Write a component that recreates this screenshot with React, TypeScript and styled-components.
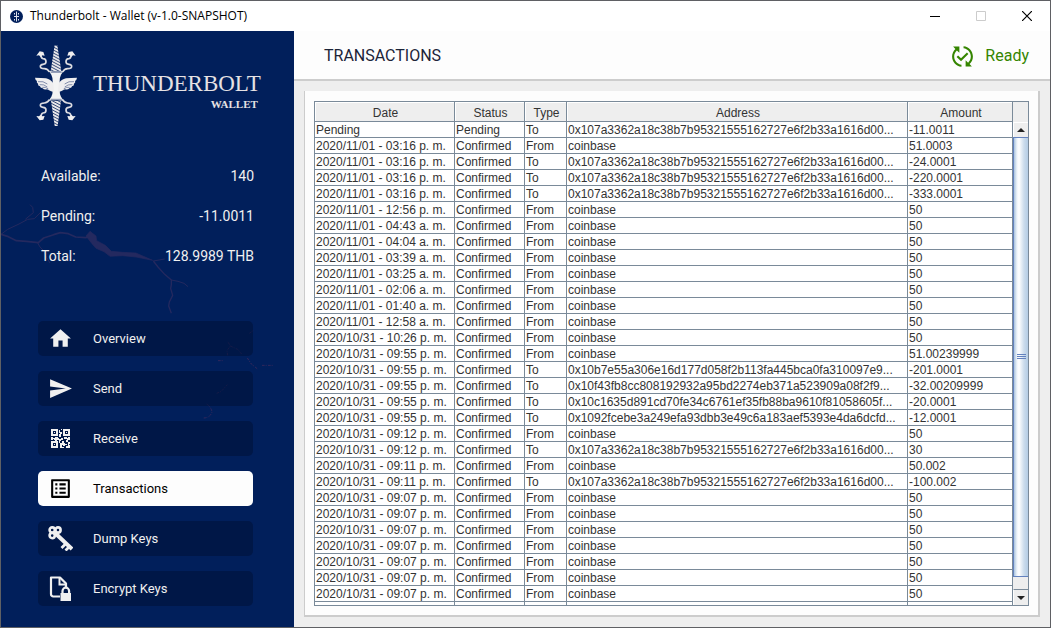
import React from "react";
import styled, { createGlobalStyle, css } from "styled-components";

const navy = "#011f5b";
const gridLine = "#7a8a99";
const paper = "#fdfdfd";

const GlobalStyle = createGlobalStyle`
  *, *::before, *::after { box-sizing: border-box; }
  body { margin: 0; font-family: Roboto, sans-serif; }
  button { font: inherit; border: 0; padding: 0; background: none; cursor: pointer; }
`;

const Window = styled.div`
  display: flex;
  flex-direction: column;
  height: 100vh;
  overflow: hidden;
  border: 1px solid #5f6064;
  background: #eeeeee;
`;

const TitleBar = styled.header`
  display: flex;
  align-items: center;
  flex: none;
  height: 30px;
  padding-left: 9px;
  gap: 7px;
  background: #ffffff;
  color: #000000;
  font: 12px/16px "Open Sans", sans-serif;
`;

const WindowTitle = styled.span`
  flex: 1;
`;

const WindowControls = styled.div`
  display: flex;
`;

const WindowButton = styled.button<{ $muted?: boolean }>`
  display: grid;
  place-items: center;
  width: 46px;
  height: 30px;
  color: ${(p) => (p.$muted ? "#cccccc" : "#000000")};
`;

const Body = styled.div`
  display: flex;
  flex: 1;
  min-height: 0;
`;

const Sidebar = styled.aside`
  position: relative;
  flex: none;
  width: 293px;
  padding: 14px 40px 0 37px;
  background: ${navy};
  color: #f0f0f0;
`;

const Lightning = styled.svg`
  position: absolute;
  inset: 0 auto auto 0;
  pointer-events: none;
`;

const Brand = styled.div`
  display: flex;
  align-items: center;
  height: 82px;
  margin: 0 -10px 0 -4px;
  gap: 15px;
`;

const BrandText = styled.div`
  display: flex;
  flex-direction: column;
  align-items: flex-end;
  padding-top: 12px;
  font-family: "Liberation Serif", serif;
  color: #e6e2e4;
`;

const BrandName = styled.span`
  font-size: 23px;
  line-height: 24px;
`;

const BrandKind = styled.span`
  padding-right: 3px;
  font-size: 11px;
  line-height: 16px;
  font-weight: 700;
`;

const Balances = styled.dl`
  position: relative;
  margin: 29px 0 45px;
  padding-left: 3px;
`;

const Balance = styled.div`
  display: flex;
  justify-content: space-between;
  font-size: 14px;
  line-height: 40px;
  dd { margin: 0; }
`;

const Nav = styled.nav`
  position: relative;
  display: flex;
  flex-direction: column;
  gap: 15px;
  margin-right: 1px;
`;

const NavButton = styled.button<{ $active?: boolean }>`
  display: flex;
  align-items: center;
  gap: 20px;
  height: 35px;
  padding: 0 10px;
  border-radius: 5px;
  font-size: 13px;
  line-height: 16px;
  color: #f0f0f0;
  background: rgba(0, 18, 58, 0.6);
  ${(p) =>
    p.$active &&
    css`
      color: #000000;
      background: ${paper};
    `}
`;

const Main = styled.main`
  display: flex;
  flex-direction: column;
  flex: 1;
  min-width: 0;
`;

const PageHeader = styled.div`
  display: flex;
  align-items: center;
  justify-content: space-between;
  flex: none;
  height: 50px;
  padding: 2px 21px 0 30px;
  background: ${paper};
  border-bottom: 2px solid #cdcdcd;
`;

const PageTitle = styled.h1`
  margin: 0;
  font-size: 16px;
  line-height: 20px;
  font-weight: 400;
  color: #1c2438;
`;

const Status = styled.div`
  display: flex;
  align-items: center;
  gap: 10px;
  font-size: 16px;
  line-height: 20px;
  color: #358500;
`;

const Card = styled.section`
  display: flex;
  flex: 1;
  min-height: 0;
  margin: 10px;
  padding: 10px 9px 9px;
  background: ${paper};
  border: solid #cccccc;
  border-width: 0 2px 2px 1px;
`;

const ScrollPane = styled.div`
  display: flex;
  flex: 1;
  min-width: 0;
  border: 1px solid ${gridLine};
`;

const Viewport = styled.div`
  flex: 1;
  min-width: 0;
  overflow: hidden;
`;

const Table = styled.table`
  width: 100%;
  table-layout: fixed;
  border-collapse: separate;
  border-spacing: 0;
  background: #ffffff;
  font: 12px/14px "Liberation Sans", Arial, sans-serif;
  color: #333333;
`;

const Column = styled.col<{ $width?: number }>`
  ${(p) => p.$width && `width: ${p.$width}px;`}
`;

const HeadCell = styled.th`
  height: 20px;
  padding: 3px 0 0 2px;
  font-weight: 400;
  background: #eeeeee;
  border: solid ${gridLine};
  border-width: 0 1px 1px 0;
  box-shadow: inset 1px 1px #ffffff;
`;

const Cell = styled.td`
  height: 16px;
  padding: 1px 0 0 1px;
  white-space: nowrap;
  overflow: hidden;
  border: solid ${gridLine};
  border-width: 0 1px 1px 0;
`;

const ScrollBar = styled.div`
  display: flex;
  flex-direction: column;
  flex: none;
  width: 15px;
  background: #eeeeee;
`;

const Corner = styled.div`
  flex: none;
  height: 20px;
`;

const ArrowButton = styled.button`
  display: grid;
  place-items: center;
  flex: none;
  height: 15px;
  color: #222222;
  background: #eeeeee;
  border-top: 1px solid #ffffff;
  border-left: 1px solid #ffffff;
  &:last-child {
    height: 16px;
    border-top-color: ${gridLine};
  }
`;

const Thumb = styled.div`
  display: grid;
  place-items: center;
  flex: 440;
  border: 1px solid #6382bf;
  border-right: 0;
  background: linear-gradient(90deg, #a9c3de 0, #eef4fa 3px, #ffffff 5px, #cbdcec 10px, #b4cce4 100%);
`;

const Track = styled.div`
  flex: 12;
`;

const addr = "0x107a3362a18c38b7b95321555162727e6f2b33a1616d00...";

type Tx = [date: string, status: string, type: string, address: string, amount: string];

const from = (date: string, amount: string): Tx => [date, "Confirmed", "From", "coinbase", amount];
const to = (date: string, amount: string, address = addr): Tx => [date, "Confirmed", "To", address, amount];

const transactions: Tx[] = [
  ["Pending", "Pending", "To", addr, "-11.0011"],
  from("2020/11/01 - 03:16 p. m.", "51.0003"),
  to("2020/11/01 - 03:16 p. m.", "-24.0001"),
  to("2020/11/01 - 03:16 p. m.", "-220.0001"),
  to("2020/11/01 - 03:16 p. m.", "-333.0001"),
  from("2020/11/01 - 12:56 p. m.", "50"),
  from("2020/11/01 - 04:43 a. m.", "50"),
  from("2020/11/01 - 04:04 a. m.", "50"),
  from("2020/11/01 - 03:39 a. m.", "50"),
  from("2020/11/01 - 03:25 a. m.", "50"),
  from("2020/11/01 - 02:06 a. m.", "50"),
  from("2020/11/01 - 01:40 a. m.", "50"),
  from("2020/11/01 - 12:58 a. m.", "50"),
  from("2020/10/31 - 10:26 p. m.", "50"),
  from("2020/10/31 - 09:55 p. m.", "51.00239999"),
  to("2020/10/31 - 09:55 p. m.", "-201.0001", "0x10b7e55a306e16d177d058f2b113fa445bca0fa310097e9..."),
  to("2020/10/31 - 09:55 p. m.", "-32.00209999", "0x10f43fb8cc808192932a95bd2274eb371a523909a08f2f9..."),
  to("2020/10/31 - 09:55 p. m.", "-20.0001", "0x10c1635d891cd70fe34c6761ef35fb88ba9610f81058605f..."),
  to("2020/10/31 - 09:55 p. m.", "-12.0001", "0x1092fcebe3a249efa93dbb3e49c6a183aef5393e4da6dcfd..."),
  from("2020/10/31 - 09:12 p. m.", "50"),
  to("2020/10/31 - 09:12 p. m.", "30"),
  from("2020/10/31 - 09:11 p. m.", "50.002"),
  to("2020/10/31 - 09:11 p. m.", "-100.002"),
  from("2020/10/31 - 09:07 p. m.", "50"),
  from("2020/10/31 - 09:07 p. m.", "50"),
  from("2020/10/31 - 09:07 p. m.", "50"),
  from("2020/10/31 - 09:07 p. m.", "50"),
  from("2020/10/31 - 09:07 p. m.", "50"),
  from("2020/10/31 - 09:07 p. m.", "50"),
  from("2020/10/31 - 09:07 p. m.", "50"),
];

const columns: { label: string; width?: number }[] = [
  { label: "Date", width: 140 },
  { label: "Status", width: 70 },
  { label: "Type", width: 42 },
  { label: "Address" },
  { label: "Amount", width: 105 },
];

const Icon = ({ children }: { children: React.ReactNode }) => (
  <svg width="25" height="25" viewBox="0 0 24 24" fill="currentColor" aria-hidden="true">
    {children}
  </svg>
);

const HomeIcon = () => <Icon><path d="M10 20v-6h4v6h5v-8h3L12 3 2 12h3v8z" /></Icon>;
const SendIcon = () => <Icon><path d="M2.01 21L23 12 2.01 3 2 10l15 2-15 2z" /></Icon>;
const ListIcon = () => (
  <Icon>
    <path d="M19 5v14H5V5h14m1.1-2H3.9c-.5 0-.9.4-.9.9v16.2c0 .4.4.9.9.9h16.2c.4 0 .9-.5.9-.9V3.9c0-.5-.5-.9-.9-.9zM11 7h6v2h-6V7zm0 4h6v2h-6v-2zm0 4h6v2h-6v-2zM7 7h2v2H7V7zm0 4h2v2H7v-2zm0 4h2v2H7v-2z" />
  </Icon>
);
const QrIcon = () => (
  <svg width="25" height="25" viewBox="0 0 25 25" fill="currentColor" aria-hidden="true">
    <path
      fillRule="evenodd"
      d="M3 3h7v7H3zM5 5v3h3V5zM15 3h7v7h-7zM17 5v3h3V5zM3 15h7v7H3zM5 17v3h3v-3z"
    />
    <path d="M6 6h1v1H6zM18 6h1v1h-1zM6 18h1v1H6zM11 4h1v2h2v2h-1v3h-2V8h1V7h-1zM13 3h1v1h-1zM3 11h2v1h2v-1h3v1h1v1h2v-1h2v2h-2v1h-1v2h-1v-3H9v1H7v-1H6v-1H5v1H3zM16 11h3v1h1v-1h2v3h-2v1h-1v-2h-3zM12 17h2v-2h2v2h1v1h2v1h-2v1h-2v-1h-1v2h2v1h-4zM18 14h2v2h-2zM20 16h2v2h-1v1h-1zM18 20h2v-1h2v3h-4z" />
  </svg>
);
const KeyIcon = () => (
  <svg width="25" height="25" viewBox="0 0 25 25" fill="none" stroke="currentColor" aria-hidden="true">
    <circle cx="4.200" cy="4" r="2.600" strokeWidth="2.600" />
    <circle cx="10" cy="4" r="2.600" strokeWidth="2.600" />
    <circle cx="4.200" cy="9.600" r="2.600" strokeWidth="2.600" />
    <path d="M7 7l17 16" strokeWidth="4" />
    <path d="M8.500 8.500l2.500-.500" strokeWidth="4" />
    <path d="M18 17.500l-4.500 4.500M21.500 20.500l-4 4" strokeWidth="2.800" />
  </svg>
);
const EncryptIcon = () => (
  <svg width="25" height="25" viewBox="0 0 25 25" fill="none" stroke="currentColor" aria-hidden="true">
    <path d="M12 20.500H5.500a2.300 2.300 0 0 1-2.500-2.500V1.500h9l6 6V11" strokeWidth="2.200" strokeLinejoin="round" />
    <path d="M11.500 2v6.500H18" strokeWidth="2" />
    <path d="M14.500 19v-4a3.300 3.300 0 0 1 6.600 0v4" strokeWidth="2.200" />
    <rect x="12.500" y="17" width="10.500" height="8" fill="currentColor" stroke="none" />
  </svg>
);

const Emblem = () => (
  <svg width="44" height="82" viewBox="102 135 132 246" aria-hidden="true">
    <defs>
      <pattern id="twist" width="8" height="8" patternUnits="userSpaceOnUse" patternTransform="rotate(28)">
        <rect width="8" height="8" fill="#e9e8ea" />
        <rect width="8" height="2.500" fill="#2a3f70" />
      </pattern>
    </defs>
    <path d="M164 136h8l12 78h-32z" fill="url(#twist)" />
    <path d="M153 302h30l-10 76h-9z" fill="url(#twist)" />
    <path d="M146 212q22 5 45 0l-8 12q-4 8-4 20v28q0 12 4 18l8 12q-22-4-45 0l8-12q4-6 4-18v-28q0-12-4-20z" fill="#f4f4f4" />
    <path
      id="wing"
      d="M160 250q-8-12-22-15-14-2-33-2 1 8 6 10-3 4 3 8-1 6 6 8 0 5 8 6 4 5 13 3l12 6 9 2z"
      fill="#efeeef"
    />
    <use href="#wing" transform="translate(336 0) scale(-1 1)" />
    <g fill="none" stroke="#4b5c88" strokeWidth="2">
      <path d="M114 245q16-3 28 7M119 254q13-2 23 7M127 262q10-2 18 5M222 245q-16-3-28 7M217 254q-13-2-23 7M209 262q-10-2-18 5M152 217h33M152 298h33" />
    </g>
    <g fill="none" stroke="#dddde2" strokeWidth="5">
      <path id="serpent" d="M148 216q-5-10-15-10-12 0-12-7 0-5 8-6 9-1 9-8 0-9-9-9-6-1-6-12" />
      <use href="#serpent" transform="translate(336 0) scale(-1 1)" />
      <use href="#serpent" transform="translate(0 515) scale(1 -1)" />
      <use href="#serpent" transform="translate(336 515) scale(-1 -1)" />
    </g>
    <g fill="#efeeef">
      <path id="fang" d="M109 167l10-13 11 2 4 11-9-1-3 5-5-5z" />
      <use href="#fang" transform="translate(336 0) scale(-1 1)" />
      <use href="#fang" transform="translate(0 515) scale(1 -1)" />
      <use href="#fang" transform="translate(336 515) scale(-1 -1)" />
    </g>
  </svg>
);

const LightningArt = () => (
  <Lightning width="293" height="597" viewBox="3 93 879 1791" fill="none" stroke="#24295f" aria-hidden="true">
    <g strokeLinejoin="round">
      <path strokeWidth="5" d="M3 703l22 7 24 12 30 2 36 4 16-14 30-10 20-6 24 3 22 10 30 2 24-7" />
      <path fill="#24295f" strokeWidth="2" d="M258 708l12-14 18 14 2 14 26 14 18 18 34 3 40 2 50 22-50-10-40-4-38 2-18-14-24-10-12-14z" />
      <path strokeWidth="4" d="M460 783l14 18 20 22 20 17 0 14-2 12 6 20-10 20-2 12 8 22" />
      <path strokeWidth="3" d="M514 840l20 4 18 6 12 10M460 783l34-6M3 703l20-15 34-16 26-14 20-2 22-22M76 658l24-20-2-16-8-8M112 727l8 14 10 10 10 22 10 16" />
    </g>
    <g stroke="#33285c" strokeWidth="3" strokeDasharray="8 3 3 4">
      <path d="M683 1066l-2-14 10-14-8-14M691 1038l22 10 12 14M742 1074l12 18 20 16M654 1082h18M786 1096h32M748 1000l14-10M650 1180l14-6 18-20M620 1212q14 10 16 24-6 18-26 18" />
    </g>
  </Lightning>
);

const nav = [
  { label: "Overview", icon: <HomeIcon /> },
  { label: "Send", icon: <SendIcon /> },
  { label: "Receive", icon: <QrIcon /> },
  { label: "Transactions", icon: <ListIcon />, active: true },
  { label: "Dump Keys", icon: <KeyIcon /> },
  { label: "Encrypt Keys", icon: <EncryptIcon /> },
];

const balances = [
  ["Available:", "140"],
  ["Pending:", "-11.0011"],
  ["Total:", "128.9989 THB"],
];

export default function App() {
  return (
    <Window>
      <GlobalStyle />
      <TitleBar>
        <svg width="13" height="13" viewBox="0 0 13 13" aria-hidden="true">
          <circle cx="6.500" cy="6.500" r="6.500" fill={navy} />
          <path d="M6.500 1.500v10M4 6.500h5M4.500 3v1.500M8.500 3v1.500M4.500 9v1.500M8.500 9v1.500" stroke="#dfe4ee" fill="none" />
        </svg>
        <WindowTitle>Thunderbolt - Wallet (v-1.0-SNAPSHOT)</WindowTitle>
        <WindowControls>
          <WindowButton aria-label="Minimize">
            <svg width="10" height="10"><path d="M0 5.500h10" stroke="currentColor" /></svg>
          </WindowButton>
          <WindowButton aria-label="Maximize" $muted>
            <svg width="10" height="10"><path d="M.5.5h9v9h-9z" fill="none" stroke="currentColor" /></svg>
          </WindowButton>
          <WindowButton aria-label="Close">
            <svg width="10" height="10"><path d="M0 0l10 10M10 0L0 10" stroke="currentColor" strokeWidth="1.200" /></svg>
          </WindowButton>
        </WindowControls>
      </TitleBar>
      <Body>
        <Sidebar>
          <LightningArt />
          <Brand>
            <Emblem />
            <BrandText>
              <BrandName>THUNDERBOLT</BrandName>
              <BrandKind>WALLET</BrandKind>
            </BrandText>
          </Brand>
          <Balances>
            {balances.map(([label, value]) => (
              <Balance key={label}>
                <dt>{label}</dt>
                <dd>{value}</dd>
              </Balance>
            ))}
          </Balances>
          <Nav>
            {nav.map((item) => (
              <NavButton key={item.label} $active={item.active} aria-current={item.active ? "page" : undefined}>
                {item.icon}
                {item.label}
              </NavButton>
            ))}
          </Nav>
        </Sidebar>
        <Main>
          <PageHeader>
            <PageTitle>TRANSACTIONS</PageTitle>
            <Status>
              <Icon>
                <path d="M17.660 9.530l-7.070 7.070-4.240-4.240 1.410-1.410 2.830 2.830 5.660-5.660 1.410 1.410zM4 12c0-2.330 1.020-4.420 2.620-5.880L9 8.500v-6H3l2.200 2.200C3.240 6.520 2 9.110 2 12c0 5.190 3.950 9.450 9 9.950v-2.020c-3.940-.490-7-3.860-7-7.930zm18 0c0-5.190-3.950-9.450-9-9.950v2.020c3.940.490 7 3.860 7 7.930 0 2.330-1.020 4.420-2.620 5.880L15 15.500v6h6l-2.200-2.200c1.960-1.820 3.200-4.410 3.200-7.300z" />
              </Icon>
              Ready
            </Status>
          </PageHeader>
          <Card>
            <ScrollPane>
              <Viewport>
                <Table>
                  <colgroup>
                    {columns.map((c) => <Column key={c.label} $width={c.width} />)}
                  </colgroup>
                  <thead>
                    <tr>{columns.map((c) => <HeadCell key={c.label} scope="col">{c.label}</HeadCell>)}</tr>
                  </thead>
                  <tbody>
                    {transactions.map((row, i) => (
                      <tr key={i}>{row.map((value, j) => <Cell key={j}>{value}</Cell>)}</tr>
                    ))}
                    <tr>{columns.map((c) => <Cell key={c.label} />)}</tr>
                  </tbody>
                </Table>
              </Viewport>
              <ScrollBar>
                <Corner />
                <ArrowButton aria-label="Scroll up">
                  <svg width="8" height="4"><path d="M0 4l4-4 4 4z" fill="currentColor" /></svg>
                </ArrowButton>
                <Thumb>
                  <svg width="9" height="6"><path d="M0 .5h9M0 2.500h9M0 4.500h9" stroke="#6382bf" /></svg>
                </Thumb>
                <Track />
                <ArrowButton aria-label="Scroll down">
                  <svg width="8" height="4"><path d="M0 0l4 4 4-4z" fill="currentColor" /></svg>
                </ArrowButton>
              </ScrollBar>
            </ScrollPane>
          </Card>
        </Main>
      </Body>
    </Window>
  );
}
